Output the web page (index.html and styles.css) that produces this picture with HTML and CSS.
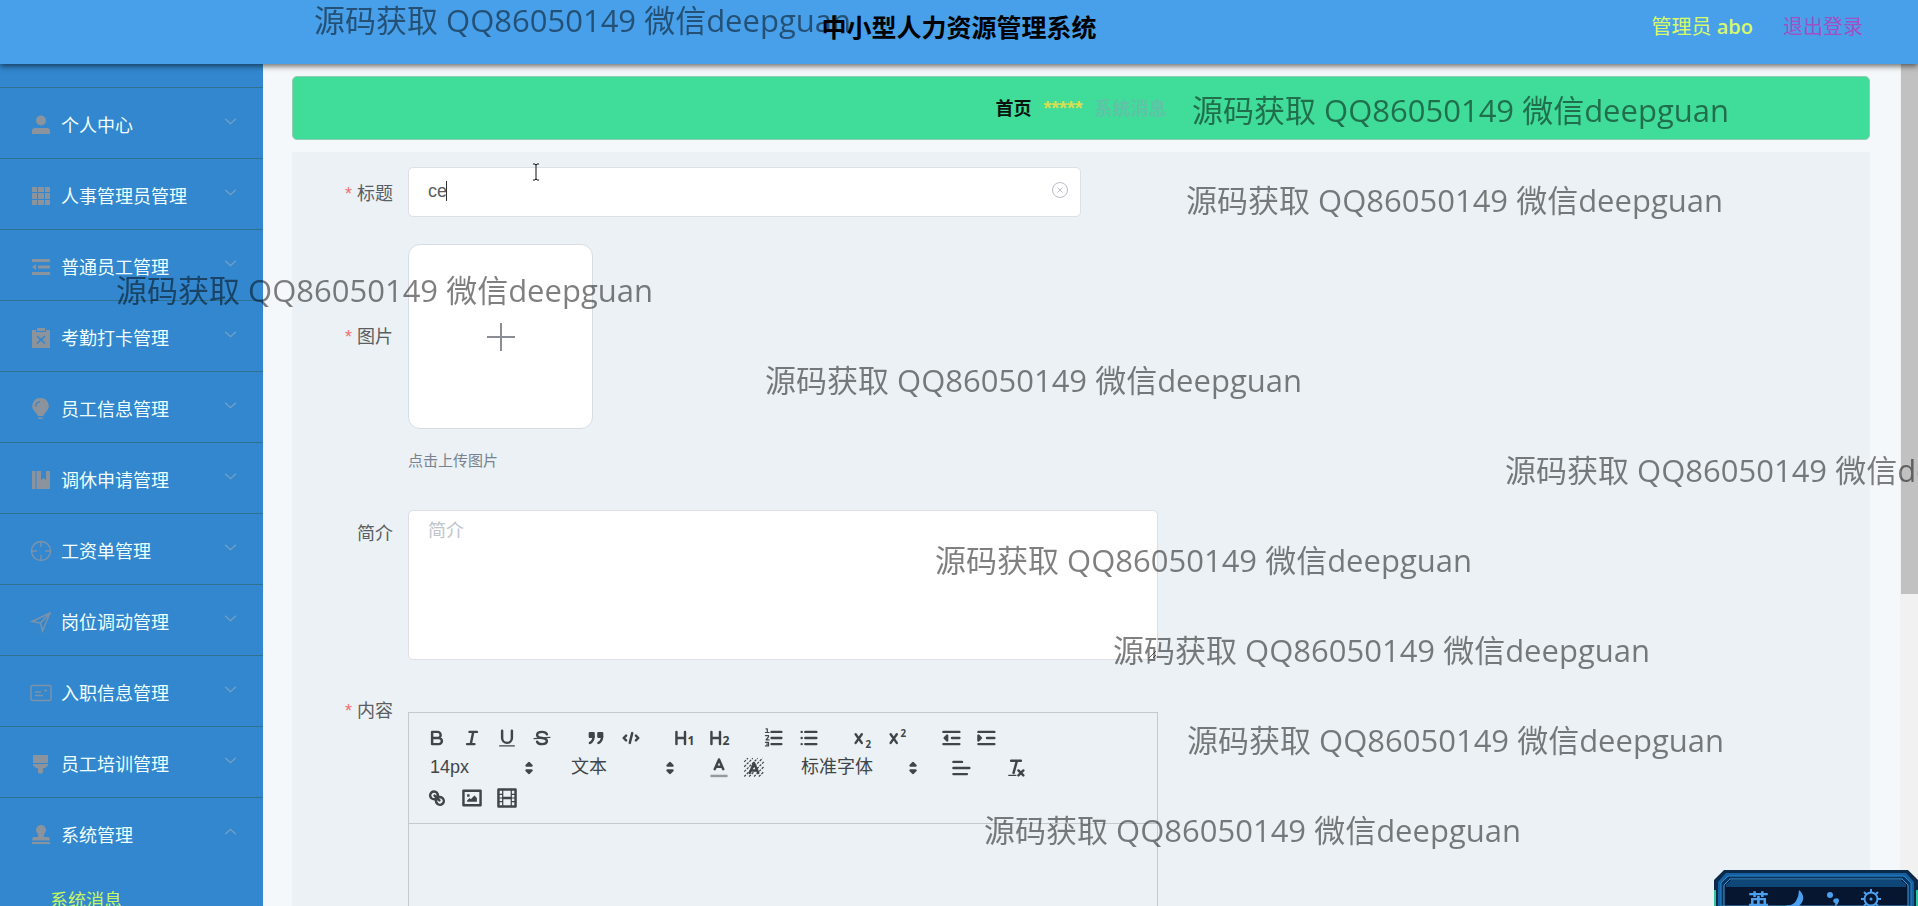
FILE: index.html
```html
<!DOCTYPE html>
<html lang="zh-CN">
<head>
<meta charset="utf-8">
<title>中小型人力资源管理系统</title>
<link rel="stylesheet" href="styles.css">
</head>
<body>
<svg class="defs" aria-hidden="true">
  <symbol id="down" viewBox="0 0 12 12"><path d="M1 3.500l5 4.500 5-4.500" fill="none" stroke="currentColor" stroke-width="1.200"/></symbol>
  <symbol id="sort" viewBox="0 0 18 18"><path d="M7 11l2 2 2-2zM7 7l2-2 2 2z" fill="currentColor" stroke="currentColor" stroke-width="2" stroke-linejoin="round"/></symbol>
</svg>

<header class="topbar">
  <h1 class="topbar-title">中小型人力资源管理系统</h1>
  <div class="topbar-user">
    <span class="user-name">管理员 <span class="user-id">abo</span></span>
    <a class="logout" href="#">退出登录</a>
  </div>
</header>

<div class="shell">
  <nav class="sidebar">
    <ul class="menu">
      <li class="menu-stub"></li>
      <li><button class="menu-item" type="button">
        <svg class="menu-icon" viewBox="0 0 20 20"><circle cx="10" cy="5.500" r="5"/><path d="M1 19v-3q0-3 3-3h12q3 0 3 3v3z"/></svg>
        <span>个人中心</span><svg class="chevron"><use href="#down"/></svg></button></li>
      <li><button class="menu-item" type="button">
        <svg class="menu-icon" viewBox="0 0 20 20"><path d="M1 1h5v5H1zM7 1h6v5H7zM14 1h5v5h-5zM1 7h5v6H1zM7 7h6v6H7zM14 7h5v6h-5zM1 14h5v5H1zM7 14h6v5H7zM14 14h5v5h-5z"/></svg>
        <span>人事管理员管理</span><svg class="chevron"><use href="#down"/></svg></button></li>
      <li><button class="menu-item" type="button">
        <svg class="menu-icon" viewBox="0 0 20 20"><path d="M1 2h18v3H1zM7 8.500h12v3H7zM1 15h18v3H1zM5 7v6l-4-3z"/></svg>
        <span>普通员工管理</span><svg class="chevron"><use href="#down"/></svg></button></li>
      <li><button class="menu-item" type="button">
        <svg class="menu-icon" viewBox="0 0 20 20"><path fill-rule="evenodd" d="M1 2h4v2h10V2h4v18H1zM6.500 7.500L5.500 8.500 8.700 11.700 5.500 15 6.500 16 10 12.700 13.500 16 14.500 15 11.300 11.700 14.500 8.500 13.500 7.500 10 10.700z"/><path d="M6 0h8v3H6z"/></svg>
        <span>考勤打卡管理</span><svg class="chevron"><use href="#down"/></svg></button></li>
      <li><button class="menu-item" type="button">
        <svg class="menu-icon" viewBox="0 0 20 20"><path fill-rule="evenodd" d="M9.500-1a8 8 0 0 1 5 14.400L12 17H7l-2.500-3.600A8 8 0 0 1 9.500-1zM4 7.500h1.300A4.500 4.500 0 0 1 9 3.300V2a5.500 5.500 0 0 0-5 5.500z"/><path d="M6.500 18.500h6L11 20H8z"/></svg>
        <span>员工信息管理</span><svg class="chevron"><use href="#down"/></svg></button></li>
      <li><button class="menu-item" type="button">
        <svg class="menu-icon" viewBox="0 0 20 20"><path d="M1 1h3.500v18H1zM5.500 1H10v9l2.500-2 2.500 2V1h4v18H5.500z"/></svg>
        <span>调休申请管理</span><svg class="chevron"><use href="#down"/></svg></button></li>
      <li><button class="menu-item" type="button">
        <svg class="menu-icon line" viewBox="0 0 20 20"><circle cx="10" cy="10" r="9.500"/><path d="M10 1v5M10 14v5M1 10h5M14 10h5"/></svg>
        <span>工资单管理</span><svg class="chevron"><use href="#down"/></svg></button></li>
      <li><button class="menu-item" type="button">
        <svg class="menu-icon line" viewBox="0 0 20 20"><path d="M1 9.500L19 1l-7.500 18-2-8z"/><path d="M9.500 11L19 1"/></svg>
        <span>岗位调动管理</span><svg class="chevron"><use href="#down"/></svg></button></li>
      <li><button class="menu-item" type="button">
        <svg class="menu-icon line" viewBox="0 0 20 20"><rect x="0" y="2.500" width="20" height="15" rx="1.500"/><path d="M4 9h6M4 12.500h8M13 7.500h3"/></svg>
        <span>入职信息管理</span><svg class="chevron"><use href="#down"/></svg></button></li>
      <li><button class="menu-item" type="button">
        <svg class="menu-icon" viewBox="0 0 20 20"><path d="M2 1h15v8H2zM2 10h15v1.500L14 14h-2v4.500q-2.500 2.500-5 0V14H5l-3-2.500z"/></svg>
        <span>员工培训管理</span><svg class="chevron"><use href="#down"/></svg></button></li>
      <li><button class="menu-item open" type="button" aria-expanded="true">
        <svg class="menu-icon" viewBox="0 0 20 20"><path d="M10 0a5 5 0 0 1 3.500 8.500q-1 1.500-.5 3.500h5l1 3.500H1L2 12h5q.5-2-.5-3.500A5 5 0 0 1 10 0zM1 17h18v2H1z"/></svg>
        <span>系统管理</span><svg class="chevron up"><use href="#down"/></svg></button>
        <a class="submenu-item" href="#">系统消息</a></li>
    </ul>
  </nav>

  <main class="content">
    <div class="breadcrumb">
      <a class="crumb-home" href="#">首页</a>
      <span class="crumb-sep">*****</span>
      <span class="crumb-current">系统消息</span>
    </div>

    <form class="panel">
      <div class="row">
        <label class="label required" for="title">标题</label>
        <div class="title-box">
          <input class="field" id="title" type="text" value="ce">
          <span class="caret"></span>
          <button class="clear" type="button" aria-label="清空"><svg viewBox="0 0 18 18"><circle cx="9" cy="9" r="7.500"/><path d="M6.500 6.500l5 5M11.500 6.500l-5 5"/></svg></button>
        </div>
      </div>

      <div class="row picture-row">
        <span class="label required" id="picture-label">图片</span>
        <div class="upload-box">
          <button class="upload" type="button" aria-labelledby="picture-label"><svg viewBox="0 0 28 28"><path d="M14 0v28M0 14h28"/></svg></button>
          <p class="hint">点击上传图片</p>
        </div>
      </div>

      <div class="row intro-row">
        <label class="label" for="intro">简介</label>
        <textarea class="field area" id="intro" placeholder="简介"></textarea>
      </div>

      <div class="row body-row">
        <span class="label required">内容</span>
        <div class="editor">
          <div class="toolbar">
            <div class="group">
              <button class="tool" type="button" aria-label="加粗"><svg viewBox="0 0 18 18"><path d="M5 4h4.500a2.500 2.500 0 0 1 0 5H5zM5 9h5.500a2.500 2.500 0 0 1 0 5H5z"/></svg></button>
              <button class="tool" type="button" aria-label="斜体"><svg viewBox="0 0 18 18"><path d="M7 4h6M5 14h6M8 14l2-10"/></svg></button>
              <button class="tool" type="button" aria-label="下划线"><svg viewBox="0 0 18 18"><path d="M5 3v6a4 4 0 0 0 8 0V3"/><path class="thin" d="M3 15.500h12"/></svg></button>
              <button class="tool" type="button" aria-label="删除线"><svg viewBox="0 0 18 18"><path d="M13 6C12.500 4.800 11 4 9 4 6.800 4 5 5 5 6.500 5 8 6 8.600 9 9s4 1 4 2.500S11.200 14 9 14c-2 0-3.500-.8-4-2"/><path class="thin" d="M15.500 8.500l-13 1"/></svg></button>
            </div>
            <div class="group">
              <button class="tool" type="button" aria-label="引用"><svg viewBox="0 0 18 18"><g class="solid"><path d="M4 5h3v3H4zM11 5h3v3h-3z"/><path d="M7 8c0 4-3 5-3 5M14 8c0 4-3 5-3 5"/></g></svg></button>
              <button class="tool" type="button" aria-label="代码"><svg viewBox="0 0 18 18"><path d="M5 7L3 9l2 2M13 7l2 2-2 2M10 5L8 13"/></svg></button>
            </div>
            <div class="group">
              <button class="tool" type="button" aria-label="标题一"><svg viewBox="0 0 18 18"><path d="M2 4v10M9 4v10M2 9h7"/><text x="11" y="15" font-size="10">1</text></svg></button>
              <button class="tool" type="button" aria-label="标题二"><svg viewBox="0 0 18 18"><path d="M2 4v10M9 4v10M2 9h7"/><text x="11" y="15" font-size="10">2</text></svg></button>
            </div>
            <div class="group">
              <button class="tool" type="button" aria-label="有序列表"><svg viewBox="0 0 18 18"><path d="M7 4h8M7 9h8M7 14h8"/><path class="thin" d="M2.500 1.500h1v3M2 4.500h3M2 7h2.500v1L2.500 10.500h2.500M2 12.500h2.500v3H2M3 14h1.500"/></svg></button>
              <button class="tool" type="button" aria-label="无序列表"><svg viewBox="0 0 18 18"><path d="M6 4h9M6 9h9M6 14h9M3 4h0M3 9h0M3 14h0"/></svg></button>
            </div>
            <div class="group">
              <button class="tool" type="button" aria-label="下标"><svg viewBox="0 0 18 18"><path d="M3 6l5 7M8 6l-5 7"/><text x="11" y="17" font-size="8">2</text></svg></button>
              <button class="tool" type="button" aria-label="上标"><svg viewBox="0 0 18 18"><path d="M3 6l5 7M8 6l-5 7"/><text x="11" y="8" font-size="8">2</text></svg></button>
            </div>
            <div class="group">
              <button class="tool" type="button" aria-label="减少缩进"><svg viewBox="0 0 18 18"><path d="M2 14h13M2 4h13M9 9h6"/><path class="solid" d="M5 7v4L3 9z"/></svg></button>
              <button class="tool" type="button" aria-label="增加缩进"><svg viewBox="0 0 18 18"><path d="M2 14h13M2 4h13M9 9h6"/><path class="solid" d="M2 7v4l2-2z"/></svg></button>
            </div>
            <div class="group picker">
              <select aria-label="字号"><option>14px</option></select><svg class="sort"><use href="#sort"/></svg>
            </div>
            <div class="group picker">
              <select aria-label="段落"><option>文本</option></select><svg class="sort"><use href="#sort"/></svg>
            </div>
            <div class="group">
              <button class="tool" type="button" aria-label="文字颜色"><svg viewBox="0 0 18 18"><path d="M5.500 10L9 2l3.500 8M6.500 8h5"/><path class="pale" d="M2 15.500h14"/></svg></button>
              <button class="tool" type="button" aria-label="背景颜色"><svg viewBox="0 0 18 18"><path class="hatch" d="M1 4l3-3M1 8l7-7M1 12L12 1M1 16L16 1M5 16L17 4M9 16l8-8M13 16l4-4"/><path d="M5.500 13L9 5l3.500 8M6.500 11h5"/></svg></button>
            </div>
            <div class="group picker wide">
              <select aria-label="字体"><option>标准字体</option></select><svg class="sort"><use href="#sort"/></svg>
            </div>
            <div class="group">
              <button class="tool" type="button" aria-label="对齐"><svg viewBox="0 0 18 18"><path d="M2 9h13M2 14h11M2 4h7"/></svg></button>
            </div>
            <div class="group">
              <button class="tool" type="button" aria-label="清除格式"><svg viewBox="0 0 18 18"><path d="M5 3h8M7 13L9.500 4M11 11l4 4M15 11l-4 4"/><path class="thin" d="M3 15h6"/></svg></button>
            </div>
            <div class="group">
              <button class="tool" type="button" aria-label="链接"><svg viewBox="0 0 18 18"><path d="M7 7l4 4M8.900 4.600a4 4 0 0 1 .1 4.700 4 4 0 0 1-4.700-.2 3 3 0 1 1 4.600-4.500zM13.600 9.100a4 4 0 0 0-4.700-.1 4 4 0 0 0 .2 4.700 3 3 0 1 0 4.500-4.600z"/></svg></button>
              <button class="tool" type="button" aria-label="图片"><svg viewBox="0 0 18 18"><path d="M2 3h14v12H2z"/><path class="mark" d="M5 12V11l2-2 1 1 3-3 2 2v3zM5 6h2v2H5z"/></svg></button>
              <button class="tool" type="button" aria-label="视频"><svg viewBox="0 0 18 18"><path d="M2 2h14v14H2zM6 9h6"/><path class="thin" d="M5.500 2v14M12.500 2v14M2 6h3.500M2 9h3.500M2 12h3.500M12.500 6H16M12.500 9H16M12.500 12H16"/></svg></button>
            </div>
          </div>
          <div class="editor-body" contenteditable="true" role="textbox" aria-label="内容"></div>
        </div>
      </div>
    </form>
  </main>
  <div class="scroll-track"><div class="scroll-thumb"></div></div>
</div>

<div class="marks" aria-hidden="true">
  <span class="mark-1">源码获取 QQ86050149 微信deepguan</span>
  <span class="mark-2">源码获取 QQ86050149 微信deepguan</span>
  <span class="mark-3">源码获取 QQ86050149 微信deepguan</span>
  <span class="mark-4">源码获取 QQ86050149 微信deepguan</span>
  <span class="mark-5">源码获取 QQ86050149 微信deepguan</span>
  <span class="mark-6">源码获取 QQ86050149 微信deepguan</span>
  <span class="mark-7">源码获取 QQ86050149 微信deepguan</span>
  <span class="mark-8">源码获取 QQ86050149 微信deepguan</span>
  <span class="mark-9">源码获取 QQ86050149 微信deepguan</span>
  <span class="mark-10">源码获取 QQ86050149 微信deepguan</span>
</div>

<svg class="pointer" viewBox="0 0 8 18" aria-hidden="true"><path d="M1 1h2l1 1 1-1h2M4 2v14M1 17h2l1-1 1 1h2"/></svg>

<div class="ime">
  <svg class="ime-frame" viewBox="0 0 204 36" aria-hidden="true">
    <path d="M0 36V10L10 0h184l10 10v26z" fill="#0b2a4a"/>
    <path d="M4 36V12l8-9h180l8 9v24z" fill="#1560a0"/>
    <path d="M7 36V13l7-7h176l7 7v23z" fill="#0a3460" stroke="#2b86c8"/>
    <path d="M10 36V15l6-6h172l6 6v21z" fill="#071630" stroke="#3d9bd8"/>
    <path d="M12 14l5-4h170l5 4v3H12z" fill="#0e4678"/>
    <path d="M1 20v16M203 20v16" stroke="#2fc59a" stroke-width="2"/>
  </svg>
  <div class="ime-keys">
    <span>英</span>
    <svg viewBox="0 0 20 20"><path d="M13 1q5 4 4 10-2 7-9 8-5 0-8-3 7 1 10-4 3-5 3-11z" fill="currentColor"/></svg>
    <svg viewBox="0 0 20 20"><circle cx="6" cy="6" r="3" fill="currentColor"/><path d="M10 10q5-2 5 2-1 4-5 6 2-3 1-4-3-1-1-4z" fill="currentColor"/></svg>
    <svg viewBox="0 0 20 20"><circle cx="10" cy="10" r="6.500" fill="none" stroke="currentColor" stroke-width="2"/><circle cx="10" cy="10" r="1.500" fill="currentColor"/><path d="M10 0v4M10 16v4M0 10h4M16 10h4M3 3l2.500 2.500M14.500 14.500L17 17M17 3l-2.500 2.500M5.500 14.500L3 17" stroke="currentColor" stroke-width="2"/></svg>
  </div>
</div>
</body>
</html>
```

FILE: styles.css
```css
* { box-sizing: border-box; }

body {
  margin: 0;
  height: 100vh;
  overflow: hidden;
  display: flex;
  flex-direction: column;
  background: #f5f8fa;
  color: #5a5e64;
  font-family: "Open Sans", "Noto Sans CJK SC", sans-serif;
  font-size: 18px;
  line-height: 24px;
}

button, input, select, textarea { font: inherit; color: inherit; }
button { padding: 0; border: 0; background: none; }
a { text-decoration: none; }
.defs { display: none; }

.topbar {
  position: relative;
  z-index: 2;
  flex: none;
  height: 64px;
  padding: 0 55px 10px;
  display: grid;
  grid-template-columns: 1fr auto 1fr;
  align-items: center;
  background: #48a0ea;
  box-shadow: 0 2px 6px rgba(0, 0, 0, .6);
}
.topbar-title {
  grid-column: 2;
  margin: 0;
  color: #000;
  font-size: 25px;
  line-height: 36px;
}
.topbar-user {
  justify-self: end;
  display: flex;
  gap: 30px;
  font-size: 20px;
}
.user-name { color: #d8fa68; }
.user-id { font-weight: 600; }
.logout { color: #a050c4; }

.shell { flex: 1; min-height: 0; display: flex; }

.sidebar { flex: none; width: 263px; overflow: hidden; background: #3287ce; }
.menu { margin: 0; padding: 0; list-style: none; }
.menu-stub { height: 24px; border-bottom: 1px solid #2d7290; }
.menu-item {
  width: 100%;
  height: 71px;
  padding: 4px 26px 0 31px;
  display: flex;
  align-items: center;
  gap: 10px;
  border-bottom: 1px solid #2d7290;
  color: #f0ffff;
  text-align: left;
}
.menu-item span { flex: 1; }
.menu-item.open { border-bottom-color: transparent; }
.menu-icon { width: 20px; height: 20px; fill: #8b939c; overflow: visible; }
.menu-icon.line { fill: none; stroke: #7f93a8; stroke-width: 1.4; }
.chevron { width: 13px; height: 13px; margin-bottom: 8px; color: #74a0c6; }
.chevron.up { transform: rotate(180deg); }
.submenu-item { display: block; padding: 19px 50px; color: #c8f860; }

.content {
  flex: 1;
  min-width: 0;
  padding: 12px 30px 0 29px;
  display: flex;
  flex-direction: column;
  gap: 12px;
  overflow: hidden;
}
.breadcrumb {
  flex: none;
  height: 64px;
  display: flex;
  align-items: center;
  justify-content: center;
  gap: 12px;
  border: 1px solid #8fcdb4;
  border-radius: 5px;
  background: #40dc99;
  font-weight: 700;
}
.crumb-home { color: #0a140f; }
.crumb-sep { color: #d6df4e; font-family: "Liberation Sans", sans-serif; font-size: 20px; }
.crumb-current { color: #5fc3a6; }

.panel { flex: 1 0 auto; padding: 15px 0 0; background: #ebf1f4; }
.row { display: flex; align-items: flex-start; }
.label {
  flex: none;
  width: 116px;
  padding: 14px 15px 0 0;
  text-align: right;
}
.required::before {
  content: "*";
  margin-right: 5px;
  color: #f07070;
  font-family: "Liberation Sans", sans-serif;
}
.field {
  width: 673px;
  padding: 0 19px;
  border: 1px solid #dcdfe6;
  border-radius: 5px;
  background: #fff;
  font-family: "Liberation Sans", "Noto Sans CJK SC", sans-serif;
  outline: 0;
}
.title-box { position: relative; display: flex; }
.title-box .field { height: 50px; padding-bottom: 2px; }
.caret { position: absolute; left: 38px; top: 14px; width: 1px; height: 20px; background: #333; }
.clear { position: absolute; right: 12px; top: 14px; width: 18px; height: 18px; }
.clear svg { display: block; fill: none; stroke: #b8bcc4; stroke-width: 1; }

.picture-row { margin-top: 27px; }
.picture-row .label { padding-top: 80px; }
.upload {
  width: 185px;
  height: 185px;
  display: grid;
  place-items: center;
  border: 1px solid #d8dde4;
  border-radius: 12px;
  background: #fff;
}
.upload svg { width: 28px; height: 28px; stroke: #8a8e94; stroke-width: 2; }
.hint { margin: 19px 0 0; color: #79828f; font-size: 15px; }

.intro-row { margin-top: 38px; }
.intro-row .label { padding-top: 11px; }
.area { display: block; width: 750px; height: 150px; padding-top: 8px; }
.area::placeholder { color: #c0c4cc; }

.body-row { margin-top: 52px; }
.body-row .label { padding: 0 15px 0 0; margin-top: -14px; }
.editor { width: 750px; border: 1px solid #c3c9cd; }
.toolbar {
  padding: 10px 0 10px 10px;
  display: flex;
  flex-wrap: wrap;
  border-bottom: 1px solid #c3c9cd;
}
.group { display: flex; margin-right: 19px; }
.tool {
  width: 35px;
  height: 30px;
  display: grid;
  place-items: center;
}
.tool svg {
  width: 22px;
  height: 22px;
  fill: none;
  stroke: #40454a;
  stroke-width: 2;
  stroke-linecap: round;
  stroke-linejoin: round;
  overflow: visible;
}
.tool text { fill: #40454a; stroke: none; font-family: "Open Sans", sans-serif; font-weight: 700; }
.tool .thin { stroke-width: 1; }
.tool .pale { stroke: #969a9e; stroke-width: 2; stroke-linecap: butt; }
.tool .hatch { stroke-width: 1; stroke-linecap: butt; stroke-dasharray: 2 1; }
.tool .solid { fill: #40454a; }
.tool .mark { fill: #40454a; stroke: none; }
.picker { position: relative; width: 122px; height: 30px; }
.picker.wide { width: 135px; }
.picker select {
  width: 100%;
  padding: 0 0 2px 11px;
  border: 0;
  appearance: none;
  background: none;
  color: #40454a;
  font-family: "Liberation Sans", "Noto Sans CJK SC", sans-serif;
}
.sort { position: absolute; right: 1px; top: 4px; width: 22px; height: 22px; color: #40454a; pointer-events: none; }
.editor-body { min-height: 250px; outline: 0; }

.scroll-track { flex: none; width: 18px; background: #f1f1f1; }
.scroll-thumb { height: 63%; margin-left: 1px; background: #c1c1c1; }

.marks {
  position: fixed;
  inset: 0;
  z-index: 3;
  overflow: hidden;
  pointer-events: none;
  color: rgba(0, 0, 0, .5);
  font-size: 31px;
  line-height: 40px;
  white-space: nowrap;
}
.marks span { position: absolute; }
.mark-1 { left: 314px; top: 0; }
.mark-2 { left: 1192px; top: 90px; }
.mark-3 { left: 1186px; top: 180px; }
.mark-4 { left: 116px; top: 270px; }
.mark-5 { left: 765px; top: 360px; }
.mark-6 { left: 1505px; top: 450px; }
.mark-7 { left: 935px; top: 540px; }
.mark-8 { left: 1113px; top: 630px; }
.mark-9 { left: 1187px; top: 720px; }
.mark-10 { left: 984px; top: 810px; }

.pointer {
  position: fixed;
  left: 532px;
  top: 163px;
  z-index: 4;
  width: 8px;
  height: 18px;
  fill: none;
  stroke: #111;
}

.ime { position: fixed; right: 0; bottom: 0; z-index: 5; width: 204px; height: 36px; overflow: hidden; }
.ime-frame { position: absolute; inset: 0; width: 100%; height: 100%; }
.ime-keys {
  position: relative;
  padding: 19px 37px 0 34px;
  display: flex;
  justify-content: space-between;
  color: #4aa0ee;
  font-size: 21px;
  font-weight: 700;
}
.ime-keys svg { width: 20px; height: 20px; }
```
